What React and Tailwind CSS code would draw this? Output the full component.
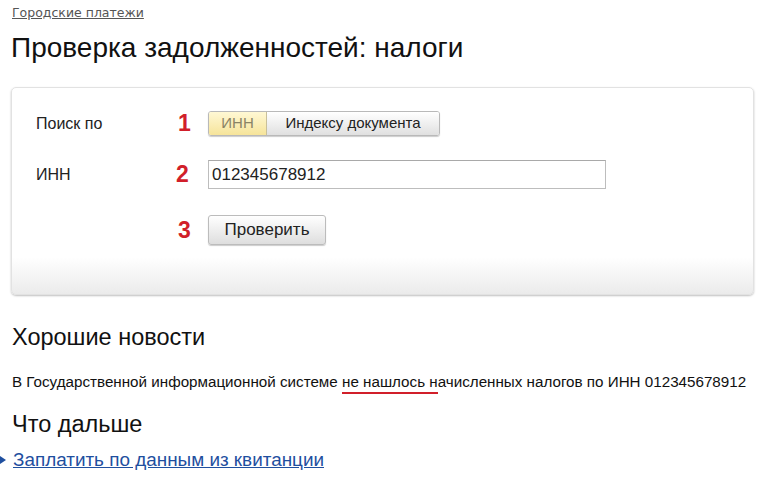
export default function App() {
    return (
        <div className="w-[760px] h-[485px] bg-white overflow-hidden relative font-['Liberation_Sans',Arial,sans-serif] text-[#111]">
            {/* breadcrumb */}
            <div className="pl-[12px] pt-[3px] h-[22px] leading-[18px]">
                <a className="text-[12.5px] font-['DejaVu_Sans',sans-serif] text-[#555] underline">Городские платежи</a>
            </div>

            {/* title */}
            <h1 className="pl-[11px] mt-[10px] text-[28px] leading-[32px] text-[#111]">
                Проверка задолженностей: налоги
            </h1>

            {/* form card */}
            <div className="ml-[11px] mt-[23px] w-[743px] h-[208px] rounded-[5px] border border-[#e2e2e2]
            shadow-[0_1px_2px_rgba(0,0,0,0.25)] bg-linear-to-b from-white from-82% to-[#ebebeb] pt-[23px] pl-[24px]">
                <div className="flex items-center h-[25px]">
                    <div className="w-[140px] text-[16px] text-[#222]">Поиск по</div>
                    <div className="w-[32px] pl-[2px] text-[23px] font-bold text-[#d11f2a] leading-none">1</div>
                    <div className="flex h-[25px] rounded-[3px] border border-[#b9b9b9] overflow-hidden
                    shadow-[0_1px_1px_rgba(0,0,0,0.2)] text-[15px]">
                        <div className="w-[58px] flex items-center justify-center bg-linear-to-b from-[#fff8d4] to-[#f6e49a]
                        text-[#8a8466] border-r border-[#c9c09a]">
                            ИНН
                        </div>
                        <div className="w-[172px] flex items-center justify-center bg-linear-to-b from-white to-[#e0e0e0] text-[#222]">
                            Индексу документа
                        </div>
                    </div>
                </div>

                <div className="flex items-center h-[29px] mt-[24px]">
                    <div className="w-[140px] text-[16px] text-[#222]">ИНН</div>
                    <div className="w-[32px] text-[23px] font-bold text-[#d11f2a] leading-none">2</div>
                    <div className="w-[398px] h-[29px] border border-[#bdbdbd] border-t-[#a9a9a9] flex items-center pl-[3px]
                    text-[17px] text-[#222] bg-white">
                        012345678912
                    </div>
                </div>

                <div className="flex items-center h-[30px] mt-[26px]">
                    <div className="w-[140px]"></div>
                    <div className="w-[32px] pl-[2px] text-[23px] font-bold text-[#d11f2a] leading-none">3</div>
                    <div className="w-[118px] h-[30px] rounded-[3px] border border-[#bcbcbc] flex items-center justify-center
                    bg-linear-to-b from-white to-[#dedede] shadow-[0_1px_1px_rgba(0,0,0,0.2)] text-[17px] text-[#222]">
                        Проверить
                    </div>
                </div>
            </div>

            {/* result */}
            <h2 className="pl-[12px] mt-[29px] text-[23.5px] leading-[26px] text-[#111]">Хорошие новости</h2>
            <p className="pl-[12px] mt-[23px] text-[15.2px] leading-[18px] text-[#111] whitespace-nowrap">
                В Государственной информационной системе{" "}
                <span className="relative">
                    не нашлось н
                    <span className="absolute left-0 right-0 -bottom-[4px] h-[2px] bg-[#d11f2a]"></span>
                </span>
                ачисленных налогов по ИНН 012345678912
            </p>

            <h2 className="pl-[12px] mt-[20px] text-[23.5px] leading-[26px] text-[#111]">Что дальше</h2>
            <div className="flex items-center mt-[12px] gap-[7px] h-[22px]">
                <span className="w-0 h-0 border-y-[4px] border-y-transparent border-l-[6px] border-l-[#1f4f9f]"></span>
                <a className="text-[18.9px] leading-[22px] text-[#1f4f9f] underline">Заплатить по данным из квитанции</a>
            </div>
        </div>
    );
}
